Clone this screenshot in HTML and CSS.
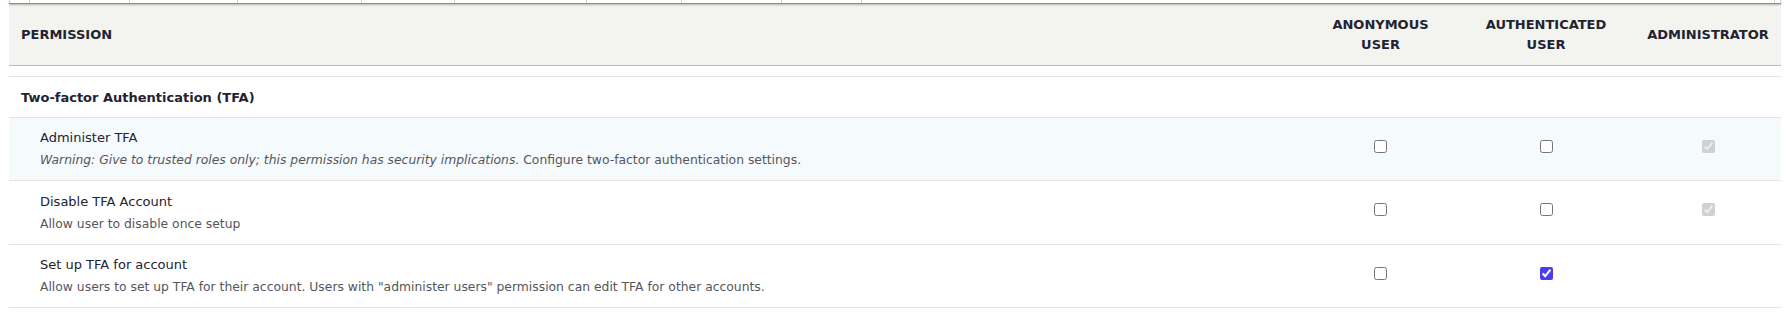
FILE: index.html
```html
<!DOCTYPE html>
<html lang="en">
<head>
    <meta charset="UTF-8">
    <meta name="viewport" content="width=device-width, initial-scale=1.0">
    <title>Permissions - Two-factor Authentication</title>
    <link rel="stylesheet" href="styles.css">
</head>
<body>
    <div class="page">
        <!-- sticky header of the table above, scrolled off -->
        <div class="sticky-strip">
            <span style="width: 20px"></span>
            <span style="width: 100px"></span>
            <span style="width: 108px"></span>
            <span style="width: 124px"></span>
            <span style="width: 93px"></span>
            <span style="width: 132px"></span>
            <span style="width: 95px"></span>
            <span style="width: 100px"></span>
            <span style="width: 80px"></span>
            <span style="width: 913px"></span>
            <span class="last"></span>
        </div>

        <div class="perm-table">
            <div class="perm-head">
                <div class="cell cell-name">Permission</div>
                <div class="cell cell-role">Anonymous<br>user</div>
                <div class="cell cell-role">Authenticated<br>user</div>
                <div class="cell cell-role cell-last">Administrator</div>
            </div>

            <div class="perm-spacer"></div>

            <div class="perm-module">Two-factor Authentication (TFA)</div>

            <div class="perm-row is-hover">
                <div class="cell cell-name">
                    <div class="perm-title">Administer TFA</div>
                    <div class="perm-desc"><em>Warning: Give to trusted roles only; this permission has security implications.</em> Configure two-factor authentication settings.</div>
                </div>
                <div class="cell cell-role"><input type="checkbox"></div>
                <div class="cell cell-role"><input type="checkbox"></div>
                <div class="cell cell-role cell-last"><input type="checkbox" checked disabled></div>
            </div>

            <div class="perm-row tall">
                <div class="cell cell-name">
                    <div class="perm-title">Disable TFA Account</div>
                    <div class="perm-desc">Allow user to disable once setup</div>
                </div>
                <div class="cell cell-role"><input type="checkbox"></div>
                <div class="cell cell-role"><input type="checkbox"></div>
                <div class="cell cell-role cell-last"><input type="checkbox" checked disabled></div>
            </div>

            <div class="perm-row">
                <div class="cell cell-name">
                    <div class="perm-title">Set up TFA for account</div>
                    <div class="perm-desc">Allow users to set up TFA for their account. Users with "administer users" permission can edit TFA for other accounts.</div>
                </div>
                <div class="cell cell-role"><input type="checkbox"></div>
                <div class="cell cell-role"><input type="checkbox" checked></div>
                <div class="cell cell-role cell-last"></div>
            </div>
        </div>
    </div>
</body>
</html>
```

FILE: styles.css
```css
* {
    margin: 0;
    padding: 0;
    box-sizing: border-box;
}

body {
    font-family: 'DejaVu Sans', Verdana, sans-serif;
    font-size: 13px;
    color: #222330;
    background: white;
}

.page {
    padding-left: 9px;
    width: 1781px;
}

.sticky-strip {
    display: flex;
    height: 4px;
    border-bottom: 1px solid #8e8e8c;
    box-shadow: 0 1px 2px rgba(0,0,0,0.25);
    position: relative;
    z-index: 1;
}

.sticky-strip span {
    height: 3px;
    border-left: 1px solid #d4d4d2;
}

.sticky-strip span.last {
    flex: 1;
    border-right: 1px solid #d4d4d2;
}

.perm-head,
.perm-row {
    display: grid;
    grid-template-columns: 1fr 165px 166px 152px;
}

.perm-head {
    background: #f3f3ef;
    height: 62px;
    border-bottom: 1px solid #bcbcb8;
    align-items: center;
    font-size: 13px;
    font-weight: 700;
    text-transform: uppercase;
    line-height: 20px;
}

.cell-name {
    padding-left: 12px;
}

.cell-role {
    text-align: center;
}

.cell-last {
    padding-left: 6px;
}

.perm-spacer {
    height: 11px;
    border-bottom: 1px solid #e6e4df;
}

.perm-module {
    height: 41px;
    padding: 0 12px;
    display: flex;
    align-items: center;
    font-weight: 700;
    border-bottom: 1px solid #e6e4df;
}

.perm-row {
    height: 63px;
    align-items: center;
    border-bottom: 1px solid #e6e4df;
}

.perm-row.tall {
    height: 64px;
}

.perm-row.is-hover {
    background: #f5fafd;
}

.perm-row .cell-name {
    padding-left: 31px;
}

.perm-title {
    line-height: 20px;
}

.perm-desc {
    margin-top: 2px;
    font-size: 12.35px;
    line-height: 20px;
    color: #55565b;
}

.perm-row input[type="checkbox"] {
    width: 13px;
    height: 13px;
    margin: 0 0 6px;
    accent-color: #4a3cf0;
    vertical-align: middle;
}
```
